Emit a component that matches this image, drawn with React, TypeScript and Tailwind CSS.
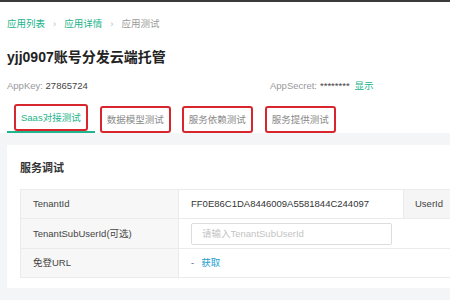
import React from "react";

const font = { fontFamily: '"Liberation Sans", "Noto Sans CJK SC", sans-serif' };

function Tab({ label, ml }: { label: string; ml: string }) {
  return (
    <div className={`${ml} h-full flex items-end`}>
      <div className="h-[27px] px-[5px] flex items-center border-2 border-[#d8262f] rounded-[3px]">
        <span className="text-[9.5px] leading-none text-[#888]">{label}</span>
      </div>
    </div>
  );
}

export default function App() {
  return (
    <div className="w-[450px] h-[300px] overflow-hidden bg-white border-t-2 border-[#3b3b3b] flex flex-col" style={font}>
      <div className="px-[7px]">
        <div className="h-[38px] flex items-center text-[9.5px] leading-none pt-[5px]">
          <span className="text-[#22b48a]">应用列表</span>
          <span className="text-[#bbb] mx-[8px]">›</span>
          <span className="text-[#22b48a]">应用详情</span>
          <span className="text-[#bbb] mx-[8px]">›</span>
          <span className="text-[#999]">应用测试</span>
        </div>
        <div className="h-[34px] flex items-center text-[14px] font-bold text-[#222] leading-none">yjj0907账号分发云端托管</div>
        <div className="h-[24px] flex items-center text-[9.5px] leading-none">
          <div className="w-[263px]">
            <span className="text-[#999]">AppKey: </span>
            <span className="text-[#444]">27865724</span>
          </div>
          <span className="text-[#999]">AppSecret: </span>
          <span className="text-[#444] ml-[3px]">********</span>
          <span className="text-[#22b48a] ml-[5px]">显示</span>
        </div>
      </div>
      <div className="h-[35px] flex px-[7px]">
        <div className="h-full flex items-start border-b-2 border-[#22b48a] px-[7px] pt-[6px]">
          <div className="h-[27px] px-[5px] flex items-center border-2 border-[#d8262f] rounded-[3px]">
            <span className="text-[9.5px] leading-none text-[#22b48a]">Saas对接测试</span>
          </div>
        </div>
        <div className="flex items-start pt-[6px]">
          <Tab label="数据模型测试" ml="ml-[5px]" />
          <Tab label="服务依赖测试" ml="ml-[11px]" />
          <Tab label="服务提供测试" ml="ml-[12px]" />
        </div>
      </div>
      <div className="flex-1 bg-[#f4f5f7] pt-[12px] pl-[7px]">
        <div className="bg-white h-[143px] pl-[13px]">
          <div className="h-[44px] flex items-center text-[11px] font-bold text-[#333] leading-none pt-[2px]">服务调试</div>
          <div className="border-t border-l border-[#ebebeb] text-[9.5px] leading-none text-[#444]">
            <div className="flex h-[29px] border-b border-[#ebebeb]">
              <div className="w-[158px] bg-[#f7f7f7] flex items-center pl-[12px] border-r border-[#ebebeb]">TenantId</div>
              <div className="w-[224px] flex items-center pl-[12px] text-[#333]">FF0E86C1DA8446009A5581844C244097</div>
              <div className="flex-1 bg-[#f5f5f5] flex items-center pl-[11px] border-l border-[#ebebeb]">UserId</div>
            </div>
            <div className="flex h-[30px] border-b border-[#ebebeb]">
              <div className="w-[158px] bg-[#f7f7f7] flex items-center pl-[12px] border-r border-[#ebebeb]">TenantSubUserId(可选)</div>
              <div className="flex-1 flex items-center pl-[12px]">
                <div className="w-[201px] h-[22px] border border-[#ddd] rounded-[2px] flex items-center pl-[10px] text-[#c4c4c4]">请输入TenantSubUserId</div>
              </div>
            </div>
            <div className="flex h-[29px] border-b border-[#ebebeb]">
              <div className="w-[158px] bg-[#f7f7f7] flex items-center pl-[12px] border-r border-[#ebebeb]">免登URL</div>
              <div className="flex-1 flex items-center pl-[12px]">
                <span className="text-[#666]">-</span>
                <span className="text-[#1d9fcf] ml-[7px]">获取</span>
              </div>
            </div>
          </div>
        </div>
      </div>
    </div>
  );
}
